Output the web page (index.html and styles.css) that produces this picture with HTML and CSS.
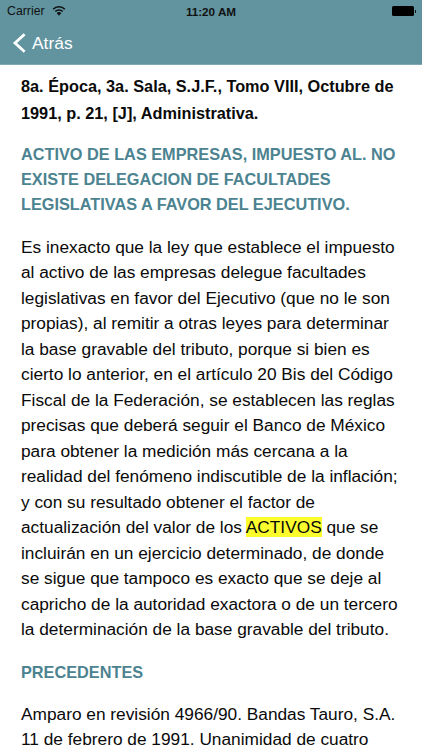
FILE: index.html
```html
<!DOCTYPE html>
<html lang="es">
<head>
<meta charset="utf-8">
<title>Tesis</title>
<link rel="stylesheet" href="styles.css">
</head>
<body>
<header class="bar">
  <div class="status">
    <div class="status-left">
      <span>Carrier</span>
      <svg class="wifi" viewBox="0 0 14 10" width="14" height="10"><path d="M7 9.8 4.6 7.1a3.4 3.4 0 0 1 4.8 0Z" fill="#111"/><path d="M3.3 5.5a5.2 5.2 0 0 1 7.4 0M1.2 3.2a8.2 8.2 0 0 1 11.6 0" fill="none" stroke="#111" stroke-width="1.6"/></svg>
    </div>
    <span class="clock">11:20 AM</span>
    <div class="battery"><span class="cell"></span><span class="tip"></span></div>
  </div>
  <div class="nav">
    <svg class="chev" viewBox="0 0 14 20" width="14" height="20"><path d="M12.6 1.2 3 10l9.6 8.8" fill="none" stroke="#fff" stroke-width="2.8"/></svg>
    <span>Atrás</span>
  </div>
</header>
<main class="content">
  <p class="ref">8a. Época, 3a. Sala, S.J.F., Tomo VIII, Octubre de 1991, p. 21, [J], Administrativa.</p>
  <h2 class="title">ACTIVO DE LAS EMPRESAS, IMPUESTO AL. NO EXISTE DELEGACION DE FACULTADES LEGISLATIVAS A FAVOR DEL EJECUTIVO.</h2>
  <p class="body">Es inexacto que la ley que establece el impuesto al activo de las empresas delegue facultades legislativas en favor del Ejecutivo (que no le son propias), al remitir a otras leyes para determinar la base gravable del tributo, porque si bien es cierto lo anterior, en el artículo 20 Bis del Código Fiscal de la Federación, se establecen las reglas precisas que deberá seguir el Banco de México para obtener la medición más cercana a la realidad del fenómeno indiscutible de la inflación; y con su resultado obtener el factor de actualización del valor de los <mark>ACTIVOS</mark> que se incluirán en un ejercicio determinado, de donde se sigue que tampoco es exacto que se deje al capricho de la autoridad exactora o de un tercero la determinación de la base gravable del tributo.</p>
  <h2 class="title section">PRECEDENTES</h2>
  <p class="body last">Amparo en revisión 4966/90. Bandas Tauro, S.A. 11 de febrero de 1991. Unanimidad de cuatro</p>
</main>
</body>
</html>
```
FILE: styles.css
```css
* { box-sizing: border-box; }
html, body { margin: 0; height: 100%; overflow: hidden; }
body { background: #fff; color: #0a0a0a; font-family: "Liberation Sans", Arial, sans-serif; }
.bar { height: 65px; background: #61949f; border-bottom: 1px solid #7fa9b2; }
.status { height: 22px; display: flex; align-items: center; justify-content: space-between; padding: 0 6px 0 7px; font-size: 12.3px; color: #111; position: relative; }
.status-left { display: flex; align-items: center; gap: 7px; }
.wifi { display: block; }
.clock { position: absolute; left: 0; right: 0; text-align: center; font-weight: 700; font-size: 11.7px; }
.battery { display: flex; align-items: center; }
.cell { width: 22px; height: 10px; background: #000; border-radius: 1.5px; }
.tip { width: 1.5px; height: 3px; background: #111; margin-left: 1px; }
.nav { height: 42px; display: flex; align-items: center; gap: 6px; padding-left: 12px; color: #fff; font-size: 17.4px; }
.chev { display: block; }
.content { padding: 8px 18px 0 21px; font-size: 17.3px; line-height: 25.47px; }
p, h2 { margin: 0; }
.ref { font-size: 16.3px; line-height: 27px; font-weight: 700; }
.title { font-size: 16.3px; line-height: 25px; font-weight: 700; color: #4c8390; margin-top: 15px; }
.body { margin-top: 18px; }
.section { margin-top: 17px; }
.last { margin-top: 17px; }
mark { background: #fdfd2e; color: inherit; }
```
